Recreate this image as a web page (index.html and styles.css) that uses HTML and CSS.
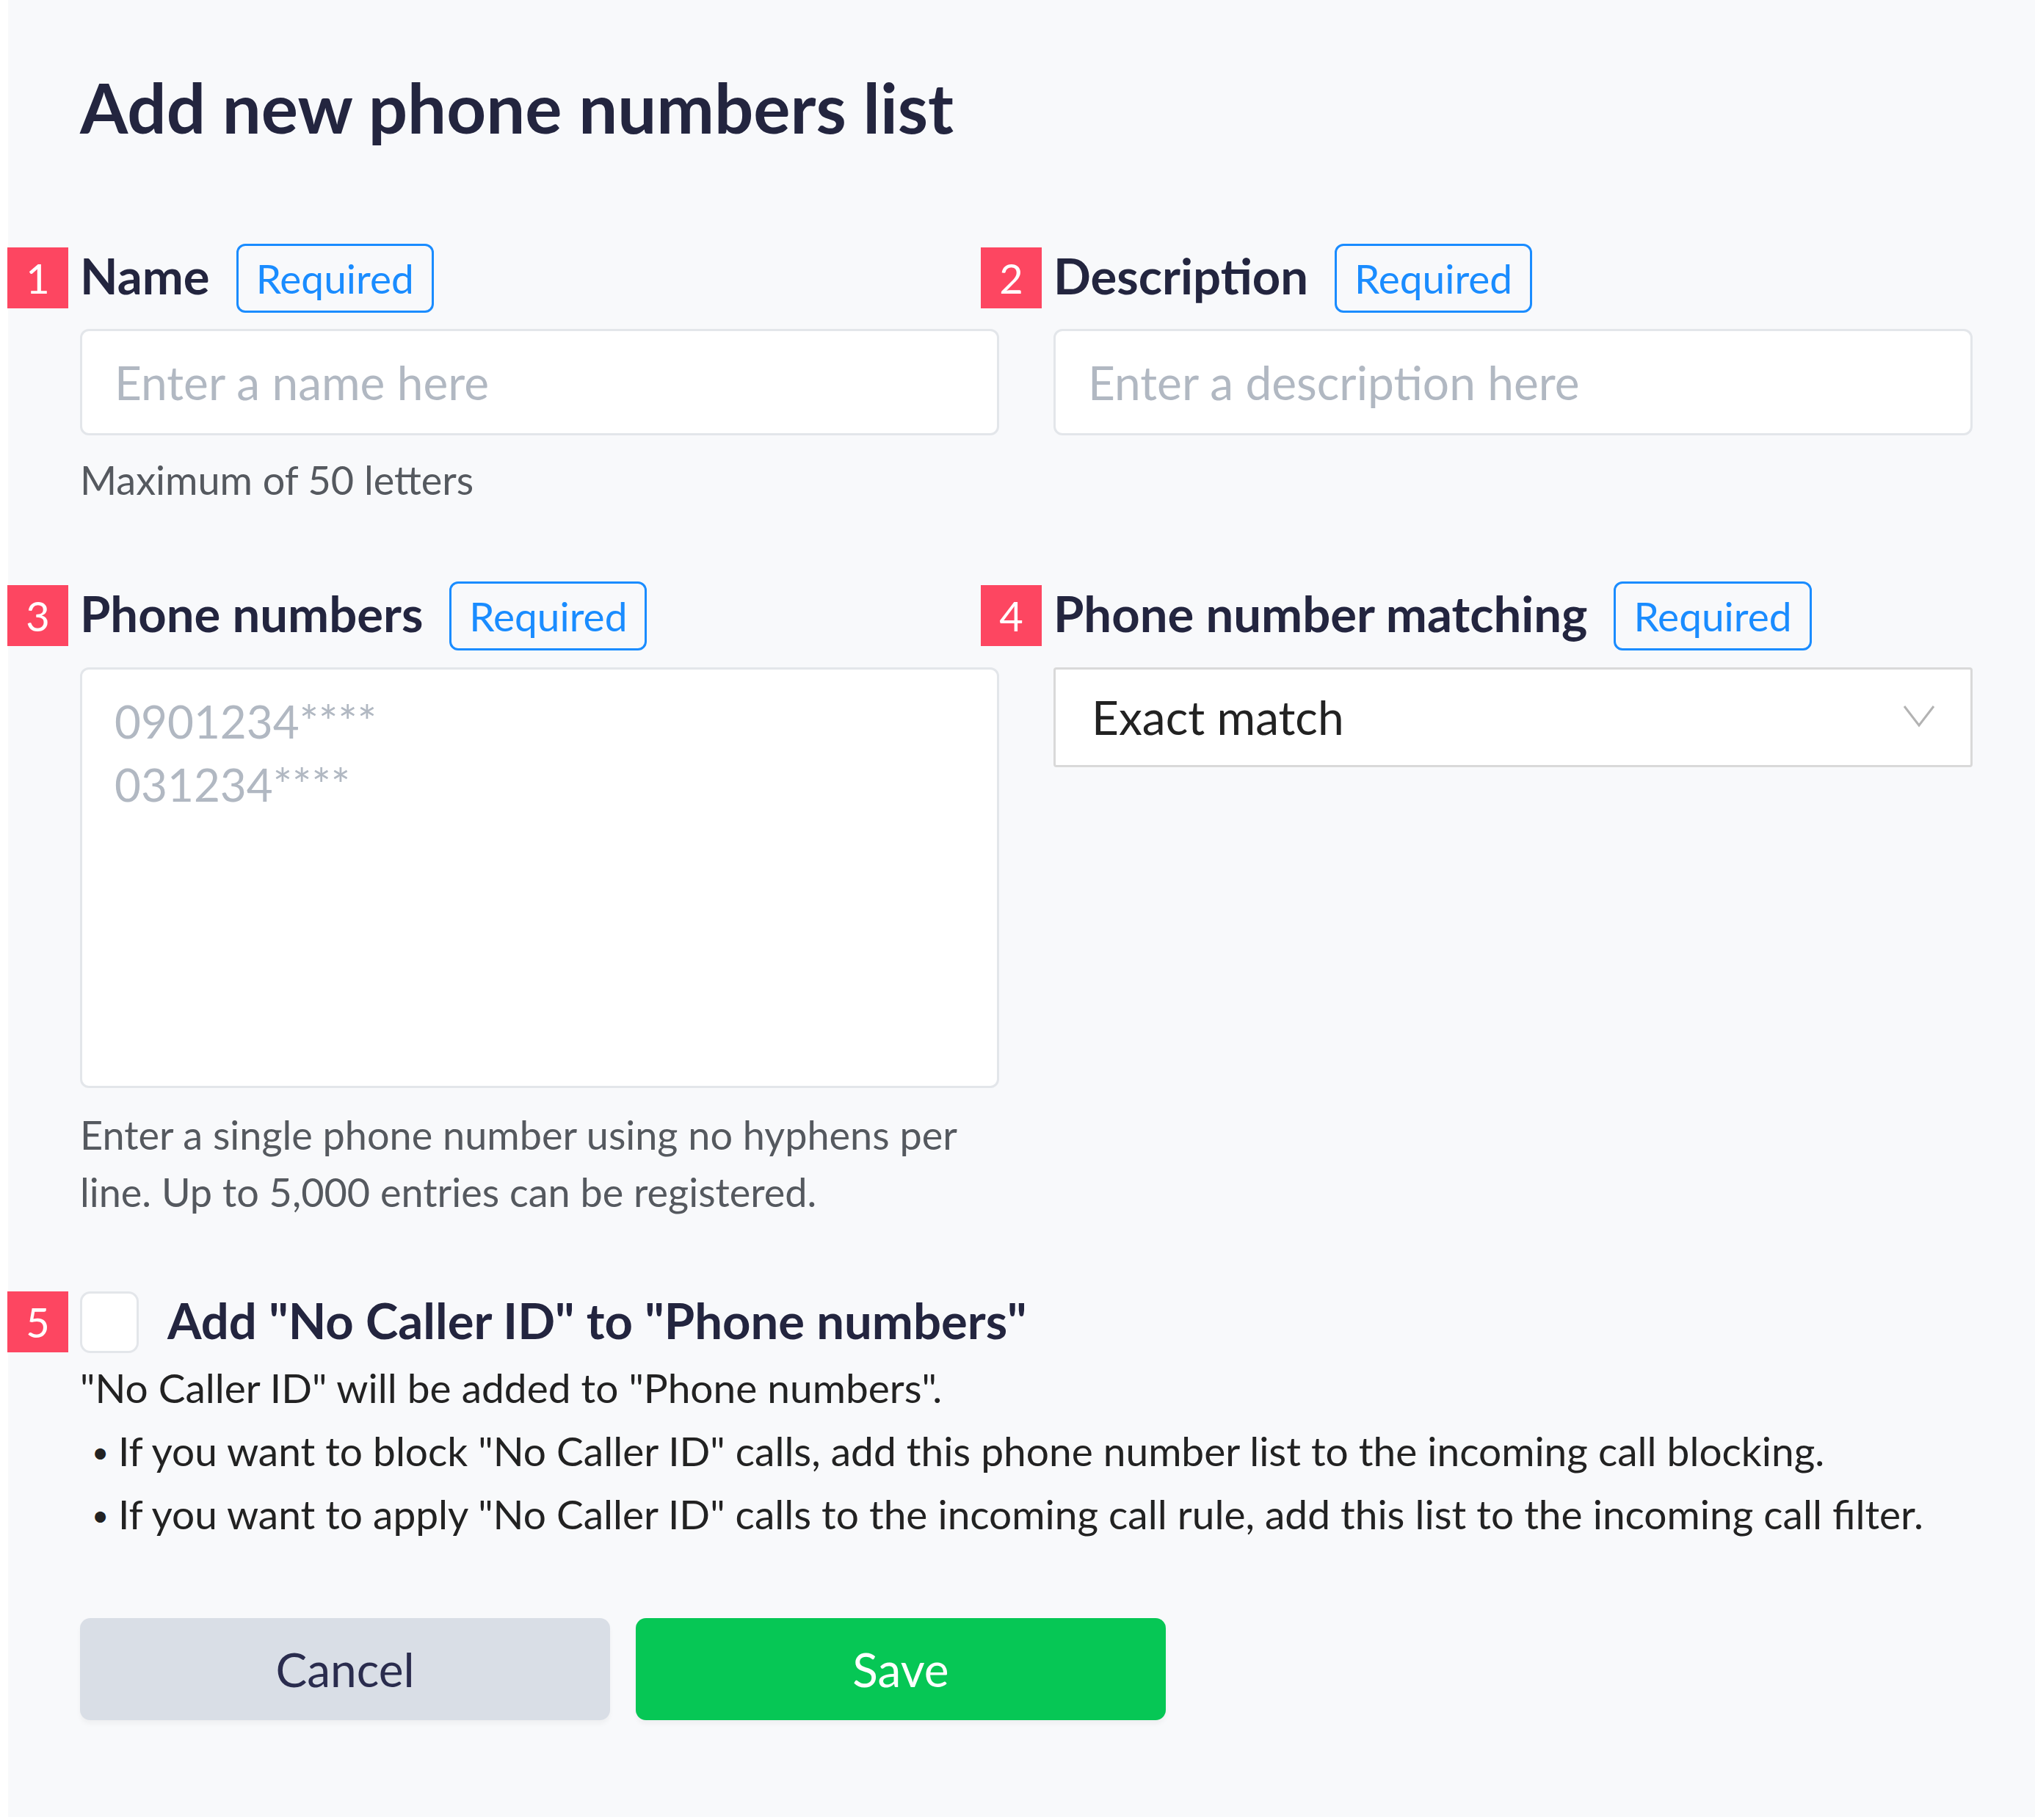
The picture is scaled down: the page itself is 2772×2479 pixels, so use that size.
FILE: index.html
```html
<!DOCTYPE html>
<html lang="en">
<head>
    <meta charset="UTF-8">
    <meta name="viewport" content="width=device-width, initial-scale=1.0">
    <title>Add new phone numbers list</title>
    <link rel="stylesheet" href="styles.css">
</head>
<body>
    <div class="page">
        <h1>Add new phone numbers list</h1>

        <!-- Champs du formulaire -->
        <div class="form-grid">
            <div class="field">
                <div class="label-row">
                    <span class="num">1</span>
                    <label class="label" for="listName">Name</label>
                    <span class="req">Required</span>
                </div>
                <input type="text" id="listName" class="text-input" placeholder="Enter a name here">
                <p class="help">Maximum of 50 letters</p>
            </div>
            <div class="field">
                <div class="label-row">
                    <span class="num">2</span>
                    <label class="label" for="listDesc">Description</label>
                    <span class="req">Required</span>
                </div>
                <input type="text" id="listDesc" class="text-input" placeholder="Enter a description here">
            </div>
            <div class="field">
                <div class="label-row">
                    <span class="num">3</span>
                    <label class="label" for="phoneList">Phone numbers</label>
                    <span class="req">Required</span>
                </div>
                <textarea id="phoneList" class="text-area" placeholder="0901234****&#10;031234****"></textarea>
                <p class="help help-wrap">Enter a single phone number using no hyphens per line. Up to 5,000 entries can be registered.</p>
            </div>
            <div class="field">
                <div class="label-row">
                    <span class="num">4</span>
                    <span class="label">Phone number matching</span>
                    <span class="req">Required</span>
                </div>
                <div class="select-box">
                    <span>Exact match</span>
                    <svg class="chevron" width="46" height="32" viewBox="0 0 46 32">
                        <polyline points="3,3 23,29 43,3" fill="none" stroke="#b3b3b3" stroke-width="3"/>
                    </svg>
                </div>
            </div>
        </div>

        <!-- Option No Caller ID -->
        <div class="check-section">
            <div class="check-row">
                <span class="num">5</span>
                <span class="check-box"></span>
                <span class="check-label">Add "No Caller ID" to "Phone numbers"</span>
            </div>
            <p class="note">"No Caller ID" will be added to "Phone numbers".</p>
            <ul class="note-list">
                <li>If you want to block "No Caller ID" calls, add this phone number list to the incoming call blocking.</li>
                <li>If you want to apply "No Caller ID" calls to the incoming call rule, add this list to the incoming call filter.</li>
            </ul>
        </div>

        <div class="actions">
            <button class="btn btn-cancel">Cancel</button>
            <button class="btn btn-save">Save</button>
        </div>
    </div>
</body>
</html>
```

FILE: styles.css
```css
body {
    margin: 0;
    background: #ffffff;
    font-family: Lato, "Noto Sans", sans-serif;
}
.page {
    margin: 0 0 4px 11px;
    min-height: 2475px;
    box-sizing: border-box;
    padding: 90px 85px 0 98px;
    background: #f8f9fb;
}
h1 {
    margin: 0;
    font-size: 94px;
    font-weight: 700;
    line-height: 1.2;
    color: #23253f;
}
.form-grid {
    display: grid;
    grid-template-columns: 1fr 1fr;
    column-gap: 74px;
    row-gap: 99px;
    margin-top: 129px;
}
.label-row {
    display: flex;
    align-items: center;
    height: 94px;
}
.num {
    display: flex;
    align-items: center;
    justify-content: center;
    flex: none;
    width: 83px;
    height: 83px;
    margin-left: -99px;
    background: #fd4661;
    color: #ffffff;
    font-size: 56px;
    line-height: 1;
}
.label {
    margin-left: 16px;
    margin-bottom: 8px;
    font-size: 67px;
    font-weight: 700;
    color: #23253f;
}
.req {
    display: flex;
    align-items: center;
    box-sizing: border-box;
    height: 94px;
    margin-left: 36px;
    padding: 0 24px;
    border: 3px solid #1a8cff;
    border-radius: 12px;
    font-size: 55px;
    color: #1a8cff;
}
.text-input,
.text-area {
    display: block;
    box-sizing: border-box;
    width: 100%;
    border: 3px solid #e3e6ea;
    border-radius: 12px;
    background: #ffffff;
    font-family: Lato, "Noto Sans", sans-serif;
    font-size: 64px;
    color: #222222;
    outline: none;
}
.text-input {
    height: 145px;
    margin-top: 22px;
    padding: 0 44px;
}
.text-area {
    height: 573px;
    margin-top: 23px;
    padding: 27px 44px;
    font-size: 62px;
    line-height: 86px;
    resize: none;
}
.text-input::placeholder,
.text-area::placeholder {
    color: #b1b8c2;
}
.help {
    margin: 22px 0 0;
    font-size: 54px;
    line-height: 78px;
    color: #55595f;
}
.help-wrap {
    margin-top: 25px;
}
.select-box {
    display: flex;
    align-items: center;
    justify-content: space-between;
    box-sizing: border-box;
    height: 136px;
    margin-top: 23px;
    padding: 0 47px 0 49px;
    border: 3px solid #d9d9d9;
    border-radius: 4px;
    background: #ffffff;
    font-size: 64px;
    color: #222222;
}
.chevron {
    margin-bottom: 4px;
}
.check-section {
    margin-top: 96px;
}
.check-row {
    display: flex;
    align-items: center;
    height: 84px;
}
.check-box {
    flex: none;
    box-sizing: border-box;
    width: 80px;
    height: 84px;
    margin-left: 16px;
    border: 3px solid #e3e6ea;
    border-radius: 14px;
    background: #ffffff;
}
.check-label {
    margin-left: 39px;
    margin-bottom: 6px;
    font-size: 67px;
    font-weight: 700;
    color: #23253f;
}
.note {
    margin: 4px 0 0;
    font-size: 55px;
    line-height: 86px;
    color: #222222;
}
.note-list {
    margin: 0;
    padding: 0;
    list-style: none;
    font-size: 55px;
    line-height: 86px;
    color: #222222;
}
.note-list li::before {
    content: "\2022";
    display: inline-block;
    width: 36px;
    margin-left: 16px;
    font-size: 40px;
    line-height: 1;
    vertical-align: 4px;
}
.actions {
    display: flex;
    gap: 35px;
    margin-top: 99px;
}
.btn {
    width: 722px;
    height: 139px;
    border: none;
    border-radius: 14px;
    font-family: Lato, "Noto Sans", sans-serif;
    font-size: 64px;
    cursor: pointer;
    box-shadow: 0 5px 6px rgba(0, 0, 0, 0.04);
}
.btn-cancel {
    background: #d9dee6;
    color: #2a2c4e;
}
.btn-save {
    background: #06c755;
    color: #ffffff;
}
```
